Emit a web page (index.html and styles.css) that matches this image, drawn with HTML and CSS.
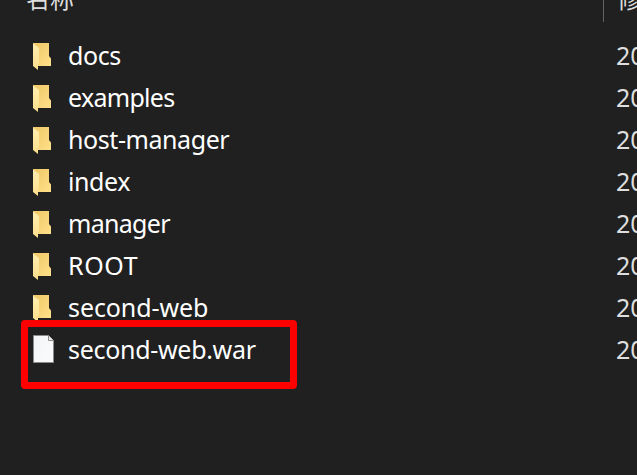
FILE: index.html
```
<!DOCTYPE html>
<html lang="zh-CN">
<head>
<meta charset="utf-8">
<title>webapps</title>
<link rel="stylesheet" href="styles.css">
</head>
<body>
<svg class="defs" width="0" height="0" aria-hidden="true">
  <defs>
    <linearGradient id="back" x1="0" y1="0" x2="1" y2="1"><stop offset="0" stop-color="#efc765"/><stop offset="1" stop-color="#ffe08a"/></linearGradient>
    <linearGradient id="flap" x1="0" y1="0" x2="0" y2="1"><stop offset="0" stop-color="#ffedb0"/><stop offset="1" stop-color="#fddf8b"/></linearGradient>
    <linearGradient id="paper" x1="0" y1="0" x2="1" y2="1"><stop offset="0" stop-color="#f4f5f6"/><stop offset="1" stop-color="#fafbfc"/></linearGradient>
    <symbol id="folder" viewBox="0 0 24 28">
      <path fill="url(#back)" d="M0 0H16V13L18 15.500V23H0Z"/>
      <path fill="url(#flap)" d="M0 .5L6 5V20L5 21V27L0 23Z"/>
    </symbol>
    <symbol id="file" viewBox="0 0 24 28">
      <path fill="url(#paper)" stroke="#8c8c8c" d="M.5 .5H15.500L20.500 5.500V27.500H.5Z"/>
      <path fill="#eceded" stroke="#8c8c8c" d="M15.500 .5V5.500H20.500"/>
    </symbol>
  </defs>
</svg>
<main class="list">
  <header class="head"><span class="title">名称</span><span class="date">修改日期</span></header>
  <div class="row"><svg class="icon"><use href="#folder"/></svg><span class="name snug">docs</span><span class="date">2022</span></div>
  <div class="row"><svg class="icon"><use href="#folder"/></svg><span class="name tight">examples</span><span class="date">2022</span></div>
  <div class="row"><svg class="icon"><use href="#folder"/></svg><span class="name snug">host-manager</span><span class="date">2022</span></div>
  <div class="row"><svg class="icon"><use href="#folder"/></svg><span class="name snug">index</span><span class="date">2022</span></div>
  <div class="row"><svg class="icon"><use href="#folder"/></svg><span class="name tight">manager</span><span class="date">2022</span></div>
  <div class="row"><svg class="icon"><use href="#folder"/></svg><span class="name wide">ROOT</span><span class="date">2022</span></div>
  <div class="row"><svg class="icon"><use href="#folder"/></svg><span class="name">second-web</span><span class="date">2022</span></div>
  <div class="row marked"><svg class="icon"><use href="#file"/></svg><span class="name loose">second-web.war</span><span class="date">2022</span></div>
</main>
</body>
</html>
```
FILE: styles.css
```
*, *::after { box-sizing: border-box; }
body {
  margin: 0;
  height: 475px;
  overflow: hidden;
  background: #202020;
  color: #fff;
  font: 25px/42px "Noto Sans", "Noto Sans CJK SC", sans-serif;
}
.defs { position: absolute; }
.list { width: 637px; height: 475px; overflow: hidden; }
.head {
  display: grid;
  grid-template-columns: 577px 120px;
  padding-left: 26px;
  height: 34px;
  color: #dedede;
  font: 24px/34px "Noto Sans CJK SC", sans-serif;
}
.head span { margin-top: -19px; }
.head .date {
  height: 41px;
  padding-left: 13px;
  border-left: 1px solid #636363;
}
.row {
  display: grid;
  grid-template-columns: 35px 548px 80px;
  padding-left: 33px;
  height: 42px;
  position: relative;
}
.icon { width: 24px; height: 28px; margin-top: 9px; }
.marked .icon { margin-top: 7px; }
.name { white-space: nowrap; letter-spacing: -.1px; }
.snug { letter-spacing: -.42px; }
.tight { letter-spacing: -.7px; }
.loose { letter-spacing: -.3px; }
.wide { letter-spacing: .6px; }
.row .date { color: #dedede; }
.marked::after {
  content: "";
  position: absolute;
  left: 21px;
  top: -8px;
  width: 276px;
  height: 69px;
  border: 7px solid #f00;
  border-radius: 4px;
}
```
